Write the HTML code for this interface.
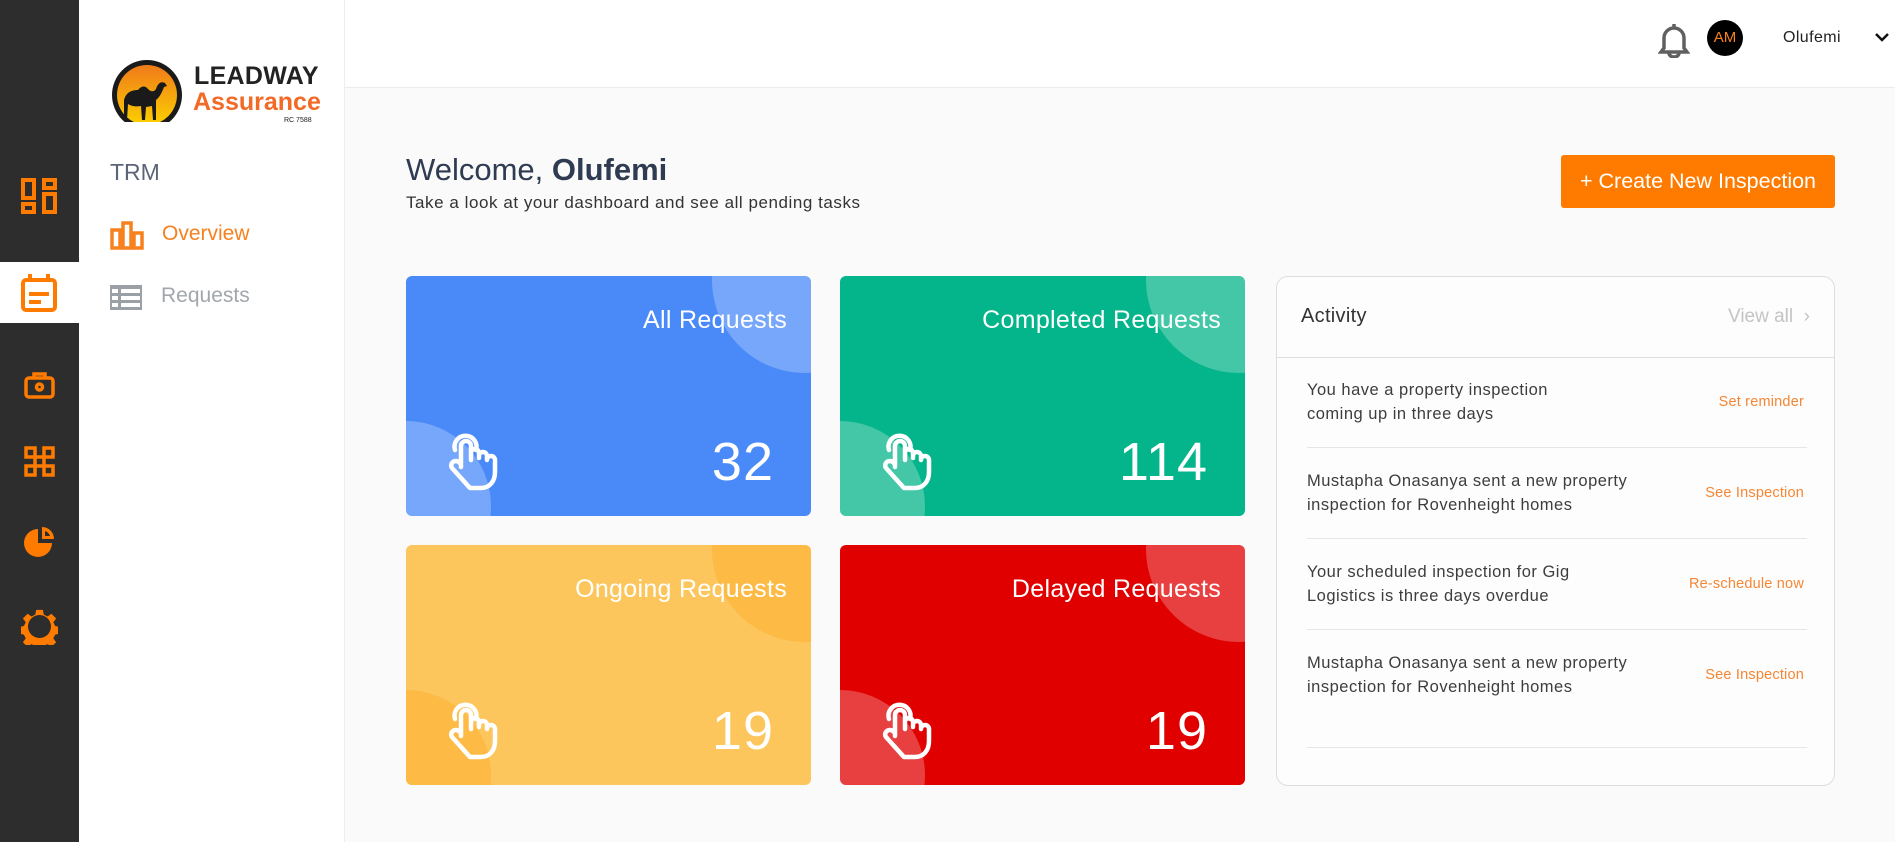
<!DOCTYPE html>
<html><head><meta charset="utf-8"><style>
*{margin:0;padding:0;box-sizing:border-box}
body{width:1895px;height:842px;overflow:hidden;background:#fafafa;font-family:"Liberation Sans",sans-serif;position:relative}
.abs{position:absolute}
.dark{left:0;top:0;width:79px;height:842px;background:#2d2d2d}
.side{left:79px;top:0;width:266px;height:842px;background:#fff;border-right:1px solid #eee}
.hdr{left:345px;top:0;width:1550px;height:88px;background:#fff;border-bottom:1px solid #ececec}
.card{position:absolute;width:405px;height:240px;border-radius:6px;overflow:hidden;color:#fff}
.card .c1{position:absolute;left:306px;top:-89px;width:186px;height:186px;border-radius:50%;background:rgba(255,255,255,.25)}
.card .c2{position:absolute;left:-85px;top:145px;width:170px;height:170px;border-radius:50%;background:rgba(255,255,255,.25)}
.card .t{position:absolute;right:24px;top:30px;font-size:25px;letter-spacing:.3px}
.card .n{position:absolute;right:37px;top:155px;font-size:54px;letter-spacing:1px}
.card svg{position:absolute;left:36px;top:156px}
.act{left:1276px;top:276px;width:559px;height:510px;border:1px solid #ddd;border-radius:12px;background:#fdfdfd}
.item{position:absolute;left:30px;width:500px;font-size:16.5px;color:#3d3d3d;line-height:24px;letter-spacing:.5px}
.item .l{position:absolute;right:3px;top:12px;font-size:14.5px;color:#f58634;letter-spacing:.2px}
.div{position:absolute;left:30px;width:500px;height:1px;background:#e6e6e6}
</style></head><body>
<div class="abs dark"></div>
<div class="abs" style="left:0;top:262px;width:79px;height:61px;background:#fff"></div>
<svg class="abs" style="left:21px;top:178px" width="36" height="36" viewBox="0 0 36 36" fill="none" stroke="#ff7b00" stroke-width="4"><rect x="2" y="2" width="11" height="18"/><rect x="23" y="2" width="11" height="8"/><rect x="2" y="26" width="11" height="8"/><rect x="23" y="16" width="11" height="18"/></svg>
<svg class="abs" style="left:21px;top:274px" width="36" height="38" viewBox="0 0 36 38" fill="none" stroke="#ff7b00" stroke-width="4"><rect x="2" y="6" width="32" height="30" rx="3"/><line x1="9" y1="0" x2="9" y2="8"/><line x1="27" y1="0" x2="27" y2="8"/><line x1="8" y1="20" x2="28" y2="20"/><line x1="8" y1="28" x2="20" y2="28"/></svg>
<svg class="abs" style="left:24px;top:371px" width="31" height="28" viewBox="0 0 31 28" fill="none" stroke="#ff7b00" stroke-width="3.5"><rect x="2" y="7" width="27" height="19" rx="3"/><path d="M10 7V3h11v4"/><circle cx="15.5" cy="16" r="3"/></svg>
<svg class="abs" style="left:24px;top:446px" width="31" height="31" viewBox="0 0 31 31" fill="none" stroke="#ff7b00" stroke-width="3.5"><rect x="2" y="2" width="9" height="9"/><rect x="20" y="2" width="9" height="9"/><rect x="2" y="20" width="9" height="9"/><rect x="20" y="20" width="9" height="9"/><rect x="11" y="11" width="9" height="9"/></svg>
<svg class="abs" style="left:24px;top:525px" width="31" height="32" viewBox="0 0 31 32"><path d="M14 4A14 14 0 1 0 28 18H14Z" fill="#ff7b00"/><path d="M18 2v12h12A12 12 0 0 0 18 2Z" fill="#ff7b00"/><path d="M21 6v5h5A8 8 0 0 0 21 6Z" fill="#2d2d2d"/></svg>
<svg class="abs" style="left:21px;top:608px" width="37" height="37" viewBox="0 0 37 37"><path d="M15 1h7l1 5 4 2 4-3 5 5-3 4 2 4 5 1v7l-5 1-2 4 3 4-5 5-4-3-4 2-1 5h-7l-1-5-4-2-4 3-5-5 3-4-2-4-5-1v-7l5-1 2-4-3-4 5-5 4 3 4-2z" fill="#ff7b00" transform="scale(.95) translate(1,1)"/><circle cx="18.5" cy="18.5" r="11.5" fill="#2d2d2d"/></svg>
<div class="abs side"></div>
<svg class="abs" style="left:110px;top:58px" width="74" height="66" viewBox="0 0 74 66"><defs><linearGradient id="g" x1="0" y1="0" x2="0" y2="1"><stop offset="0" stop-color="#f07a1a"/><stop offset="1" stop-color="#fcd000"/></linearGradient><clipPath id="cp"><rect x="0" y="0" width="74" height="64"/></clipPath></defs><g clip-path="url(#cp)"><circle cx="37" cy="37" r="35" fill="#1a1a1a"/><circle cx="37" cy="37" r="30" fill="url(#g)"/><path d="M14 42c2-8 8-10 14-10 3-4 7-5 10-1 3 3 6 3 8 0 2-6 5-8 9-6l2 3-3 1c-2 5-4 10-8 13v20h-3l-1-14-6 1-1 13h-3l-1-14c-5 1-10 0-13-2l-1 16h-3Z" fill="#1a1a1a"/></g></svg>
<div class="abs" style="left:194px;top:62px;font-size:25px;font-weight:bold;color:#222;letter-spacing:.3px">LEADWAY</div>
<div class="abs" style="left:193px;top:88px;font-size:25px;font-weight:bold;color:#f26a26">Assurance</div>
<div class="abs" style="left:284px;top:117px;font-size:7px;color:#222">RC 7588</div>
<div class="abs" style="left:110px;top:159px;font-size:23px;color:#5c6577">TRM</div>
<svg class="abs" style="left:110px;top:221px" width="34" height="29" viewBox="0 0 34 29" fill="none" stroke="#f7811f" stroke-width="3.5"><rect x="2" y="9" width="8" height="18"/><rect x="13" y="2" width="8" height="25"/><rect x="24" y="12" width="8" height="15"/></svg>
<div class="abs" style="left:162px;top:222px;font-size:21px;color:#f7811f">Overview</div>
<svg class="abs" style="left:110px;top:285px" width="32" height="25" viewBox="0 0 32 25"><rect width="32" height="25" fill="#9aa0a6"/><g fill="#fff"><rect x="2" y="4" width="6" height="4"/><rect x="11" y="4" width="19" height="4"/><rect x="2" y="11" width="6" height="4"/><rect x="11" y="11" width="19" height="4"/><rect x="2" y="18" width="6" height="4"/><rect x="11" y="18" width="19" height="4"/></g></svg>
<div class="abs" style="left:161px;top:284px;font-size:21px;color:#a2a7ad">Requests</div>
<div class="abs hdr"></div>
<svg class="abs" style="left:1658px;top:22px" width="32" height="36" viewBox="0 0 32 36" fill="none" stroke="#606060" stroke-width="3.5"><path d="M16 2v3M6 26V16a10 10 0 0 1 20 0v10l3 4H3Z"/><path d="M11 31a5 4 0 0 0 10 0"/></svg>
<div class="abs" style="left:1707px;top:20px;width:36px;height:36px;border-radius:50%;background:#000;color:#f7811f;font-size:15px;text-align:center;line-height:36px">AM</div>
<div class="abs" style="left:1783px;top:29px;font-size:16px;color:#222;letter-spacing:.4px">Olufemi</div>
<svg class="abs" style="left:1875px;top:33px" width="14" height="9" viewBox="0 0 14 9" fill="none" stroke="#111" stroke-width="2.5"><path d="M1 1l6 6 6-6"/></svg>
<div class="abs" style="left:406px;top:152px;font-size:31px;color:#2f3b52">Welcome, <b>Olufemi</b></div>
<div class="abs" style="left:406px;top:193px;font-size:17px;color:#333;letter-spacing:.55px">Take a look at your dashboard and see all pending tasks</div>
<div class="abs" style="left:1561px;top:155px;width:274px;height:53px;background:#ff7b00;border-radius:3px;color:#fff;font-size:21.5px;text-align:center;line-height:53px">+ Create New Inspection</div>
<svg width="0" height="0" style="position:absolute"><defs><g id="hand" fill="none" stroke="#fff" stroke-width="4.5" stroke-linejoin="round" stroke-linecap="round"><path d="M19 35V14a5 5 0 0 1 10 0v14M29 24v-3a4 4 0 0 1 8 0v5M37 24a4 4 0 0 1 8 0v4M45 28a4 4 0 0 1 8 0v12c0 10-6 16-14 16H28L10 36c-2-3 0-7 4-7 2 0 3 1 5 3"/><path d="M13 18a11 11 0 1 1 21 0"/></g></defs></svg>
<div class="card" style="left:406px;top:276px;background:#4a8af8"><div class="c1"></div><div class="c2"></div><div class="t">All Requests</div><div class="n">32</div><svg width="62" height="62" viewBox="0 0 62 62"><use href="#hand"/></svg></div>
<div class="card" style="left:840px;top:276px;background:#04b48a"><div class="c1"></div><div class="c2"></div><div class="t">Completed Requests</div><div class="n">114</div><svg width="62" height="62" viewBox="0 0 62 62"><use href="#hand"/></svg></div>
<div class="card" style="left:406px;top:545px;background:#fcc65c"><div class="c1" style="background:rgba(255,170,40,.45)"></div><div class="c2" style="background:rgba(255,170,40,.45)"></div><div class="t">Ongoing Requests</div><div class="n">19</div><svg width="62" height="62" viewBox="0 0 62 62"><use href="#hand"/></svg></div>
<div class="card" style="left:840px;top:545px;background:#e00000"><div class="c1"></div><div class="c2"></div><div class="t">Delayed Requests</div><div class="n">19</div><svg width="62" height="62" viewBox="0 0 62 62"><use href="#hand"/></svg></div>
<div class="abs act">
<div class="abs" style="left:24px;top:28px;font-size:20px;color:#333;letter-spacing:.3px">Activity</div>
<div class="abs" style="right:24px;top:29px;font-size:19px;color:#c4c4c4">View all &nbsp;›</div>
<div class="abs" style="left:0;top:80px;width:557px;height:1px;background:#ddd"></div>
<div class="item" style="top:101px">You have a property inspection<br>coming up in three days<span class="l">Set reminder</span></div>
<div class="div" style="top:170px"></div>
<div class="item" style="top:192px">Mustapha Onasanya sent a new property<br>inspection for Rovenheight homes<span class="l">See Inspection</span></div>
<div class="div" style="top:261px"></div>
<div class="item" style="top:283px">Your scheduled inspection for Gig<br>Logistics is three days overdue<span class="l">Re-schedule now</span></div>
<div class="div" style="top:352px"></div>
<div class="item" style="top:374px">Mustapha Onasanya sent a new property<br>inspection for Rovenheight homes<span class="l">See Inspection</span></div>
<div class="div" style="top:470px"></div>
</div>
</body></html>
